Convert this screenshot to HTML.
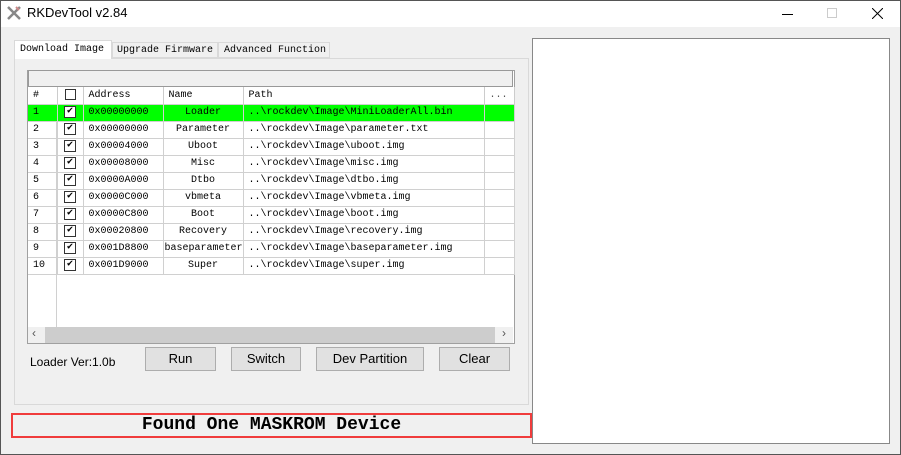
<!DOCTYPE html><html><head><style>
*{margin:0;padding:0;box-sizing:border-box}
body{width:901px;height:455px;background:#f0f0f0;position:relative;overflow:hidden;font-family:"Liberation Sans",sans-serif;border:1px solid #555}
.a{position:absolute}
.m{font-family:"Liberation Mono","Noto Sans CJK SC",monospace;font-size:10px;white-space:nowrap}
table{border-collapse:collapse;position:absolute;left:27px;top:86px;width:486px;table-layout:fixed}
td{border-right:1px solid #d0d0d0;border-bottom:1px solid #d0d0d0;height:17px;font-family:"Liberation Mono",monospace;font-size:10px;padding:0 0 0 5px;white-space:nowrap;overflow:hidden}
tr.h td{border-right:1px solid #ccc;height:17px;background:#fff}
tr.g td{background:#00ff00}
td.c{text-align:center;padding:0}
.cb{display:inline-block;width:12px;height:12px;border:1px solid #333;background:#fff;font-size:10px;line-height:10px;text-align:center;vertical-align:middle}
.btn{position:absolute;top:346px;height:24px;border:1px solid #adadad;background:#e1e1e1;font-size:13px;text-align:center;line-height:21px}
</style></head><body>
<div class="a" style="left:0;top:0;width:899px;height:26px;background:#fff"></div>
<svg class="a" style="left:5px;top:4px" width="16" height="16"><path d="M2 2L14 14M14 2L2 14" stroke="#888" stroke-width="2.5"/><path d="M10 2l3 3" stroke="#c88" stroke-width="2"/></svg>
<div class="a" style="left:26px;top:4px;font-size:13px">RKDevTool v2.84</div>
<div class="a" style="left:781px;top:13px;width:11px;height:1px;background:#000"></div>
<div class="a" style="left:826px;top:7px;width:10px;height:10px;border:1px solid #ccc"></div>
<svg class="a" style="left:871px;top:7px" width="11" height="11"><path d="M0 0L11 11M11 0L0 11" stroke="#000"/></svg>
<div class="a" style="left:13px;top:57px;width:515px;height:347px;border:1px solid #d9d9d9;background:#f0f0f0"></div>
<div class="a m" style="left:13px;top:39px;width:98px;height:19px;background:#fff;border:1px solid #d9d9d9;border-bottom:none;padding:3px 0 0 5px">Download Image</div>
<div class="a m" style="left:111px;top:41px;width:106px;height:16px;border:1px solid #d9d9d9;padding:2px 0 0 4px">Upgrade Firmware</div>
<div class="a m" style="left:217px;top:41px;width:112px;height:16px;border:1px solid #d9d9d9;padding:2px 0 0 5px">Advanced Function</div>
<div class="a" style="left:26px;top:69px;width:488px;height:274px;background:#fff;border:1px solid #a0a0a0"></div>
<div class="a" style="left:27px;top:69px;width:485px;height:17px;background:#f0f0f0;border:1px solid #999"></div>
<div class="a" style="left:27px;top:103px;width:29px;height:223px;border-right:1px solid #d0d0d0"></div>
<table>
<colgroup><col style="width:29px"><col style="width:26px"><col style="width:80px"><col style="width:80px"><col style="width:241px"><col style="width:30px"></colgroup>
<tr class="h"><td>#</td><td class="c"><span class="cb" style="width:11px;height:11px"></span></td><td>Address</td><td>Name</td><td>Path</td><td style="color:#555">...</td></tr>
<tr class="g"><td>1</td><td class="c"><span class="cb">✔</span></td><td>0x00000000</td><td class="c">Loader</td><td>..\rockdev\Image\MiniLoaderAll.bin</td><td></td></tr>
<tr><td>2</td><td class="c"><span class="cb">✔</span></td><td>0x00000000</td><td class="c">Parameter</td><td>..\rockdev\Image\parameter.txt</td><td></td></tr>
<tr><td>3</td><td class="c"><span class="cb">✔</span></td><td>0x00004000</td><td class="c">Uboot</td><td>..\rockdev\Image\uboot.img</td><td></td></tr>
<tr><td>4</td><td class="c"><span class="cb">✔</span></td><td>0x00008000</td><td class="c">Misc</td><td>..\rockdev\Image\misc.img</td><td></td></tr>
<tr><td>5</td><td class="c"><span class="cb">✔</span></td><td>0x0000A000</td><td class="c">Dtbo</td><td>..\rockdev\Image\dtbo.img</td><td></td></tr>
<tr><td>6</td><td class="c"><span class="cb">✔</span></td><td>0x0000C000</td><td class="c">vbmeta</td><td>..\rockdev\Image\vbmeta.img</td><td></td></tr>
<tr><td>7</td><td class="c"><span class="cb">✔</span></td><td>0x0000C800</td><td class="c">Boot</td><td>..\rockdev\Image\boot.img</td><td></td></tr>
<tr><td>8</td><td class="c"><span class="cb">✔</span></td><td>0x00020800</td><td class="c">Recovery</td><td>..\rockdev\Image\recovery.img</td><td></td></tr>
<tr><td>9</td><td class="c"><span class="cb">✔</span></td><td>0x001D8800</td><td style="padding-left:1px">baseparameter</td><td>..\rockdev\Image\baseparameter.img</td><td></td></tr>
<tr><td>10</td><td class="c"><span class="cb">✔</span></td><td>0x001D9000</td><td class="c">Super</td><td>..\rockdev\Image\super.img</td><td></td></tr>
</table>
<div class="a" style="left:27px;top:326px;width:485px;height:16px;background:#f0f0f0"></div>
<div class="a" style="left:44px;top:326px;width:450px;height:16px;background:#cdcdcd"></div>
<div class="a" style="left:31px;top:325px;font-size:12px;color:#555">‹</div>
<div class="a" style="left:501px;top:325px;font-size:12px;color:#555">›</div>
<div class="a" style="left:29px;top:354px;font-size:12px">Loader Ver:1.0b</div>
<div class="btn" style="left:144px;width:71px">Run</div>
<div class="btn" style="left:230px;width:70px">Switch</div>
<div class="btn" style="left:315px;width:108px">Dev Partition</div>
<div class="btn" style="left:438px;width:71px">Clear</div>
<div class="a" style="left:10px;top:412px;width:521px;height:25px;border:2px solid #f03c3c;text-align:center;font-family:'Liberation Mono',monospace;font-weight:bold;font-size:18px;line-height:21px">Found One MASKROM Device</div>
<div class="a" style="left:531px;top:37px;width:358px;height:406px;background:#fff;border:1px solid #888"></div>
</body></html>
